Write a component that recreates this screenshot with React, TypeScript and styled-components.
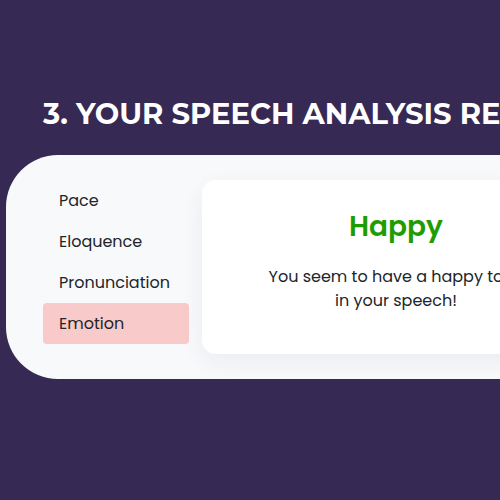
import { useState } from "react";
import styled, { createGlobalStyle } from "styled-components";

const GlobalStyle = createGlobalStyle`
  * {
    box-sizing: border-box;
  }
  body {
    margin: 0;
    background: #362953;
    color: #212529;
    font-family: Poppins, Inter, sans-serif;
  }
`;

const Page = styled.main`
  min-height: 100vh;
  overflow: hidden;
  padding: 94px 0 94px 6px;
`;

const Heading = styled.h1`
  margin: 0 0 21px 37px;
  color: #fff;
  font-family: Montserrat, Inter, sans-serif;
  font-size: 29px;
  font-weight: 700;
  line-height: 40px;
  white-space: nowrap;
`;

const Panel = styled.section`
  display: flex;
  align-items: flex-start;
  gap: 13px;
  width: max-content;
  min-width: 100%;
  padding: 25px 37px;
  border-radius: 52px;
  background: #f8f9fb;
`;

const Tabs = styled.nav`
  display: flex;
  flex-direction: column;
  min-width: 146px;
`;

const Tab = styled.button<{ $active: boolean }>`
  padding: 8px 16px;
  border: 0;
  border-radius: 4px;
  background: ${({ $active }) => ($active ? "#f8caca" : "transparent")};
  color: inherit;
  font: inherit;
  font-size: 16px;
  line-height: 25px;
  text-align: left;
  cursor: pointer;
`;

const ResultCard = styled.article`
  flex: 1;
  min-height: 174px;
  padding: 25px 60px;
  border-radius: 14px;
  background: #fff;
  box-shadow: 0 8px 24px rgba(33, 37, 70, 0.06);
  text-align: center;
`;

const ResultTitle = styled.h2`
  margin: 0 0 16px;
  color: #1f9d00;
  font-size: 28px;
  font-weight: 600;
  line-height: 44px;
`;

const ResultText = styled.p`
  width: 268px;
  margin: 0 auto;
  font-size: 16px;
  line-height: 24px;
`;

const results = [
  { name: "Pace", title: "Steady", text: "You speak at a comfortable pace!" },
  { name: "Eloquence", title: "Clear", text: "You express your ideas clearly!" },
  { name: "Pronunciation", title: "Good", text: "Your words are well pronounced!" },
  { name: "Emotion", title: "Happy", text: "You seem to have a happy tone in your speech!" },
];

export default function App() {
  const [selected, setSelected] = useState(3);
  const result = results[selected];

  return (
    <Page>
      <GlobalStyle />
      <Heading>3. YOUR SPEECH ANALYSIS RESULTS</Heading>
      <Panel>
        <Tabs aria-label="Analysis results">
          {results.map((item, index) => (
            <Tab
              key={item.name}
              type="button"
              $active={index === selected}
              aria-pressed={index === selected}
              onClick={() => setSelected(index)}
            >
              {item.name}
            </Tab>
          ))}
        </Tabs>
        <ResultCard>
          <ResultTitle>{result.title}</ResultTitle>
          <ResultText>{result.text}</ResultText>
        </ResultCard>
      </Panel>
    </Page>
  );
}
